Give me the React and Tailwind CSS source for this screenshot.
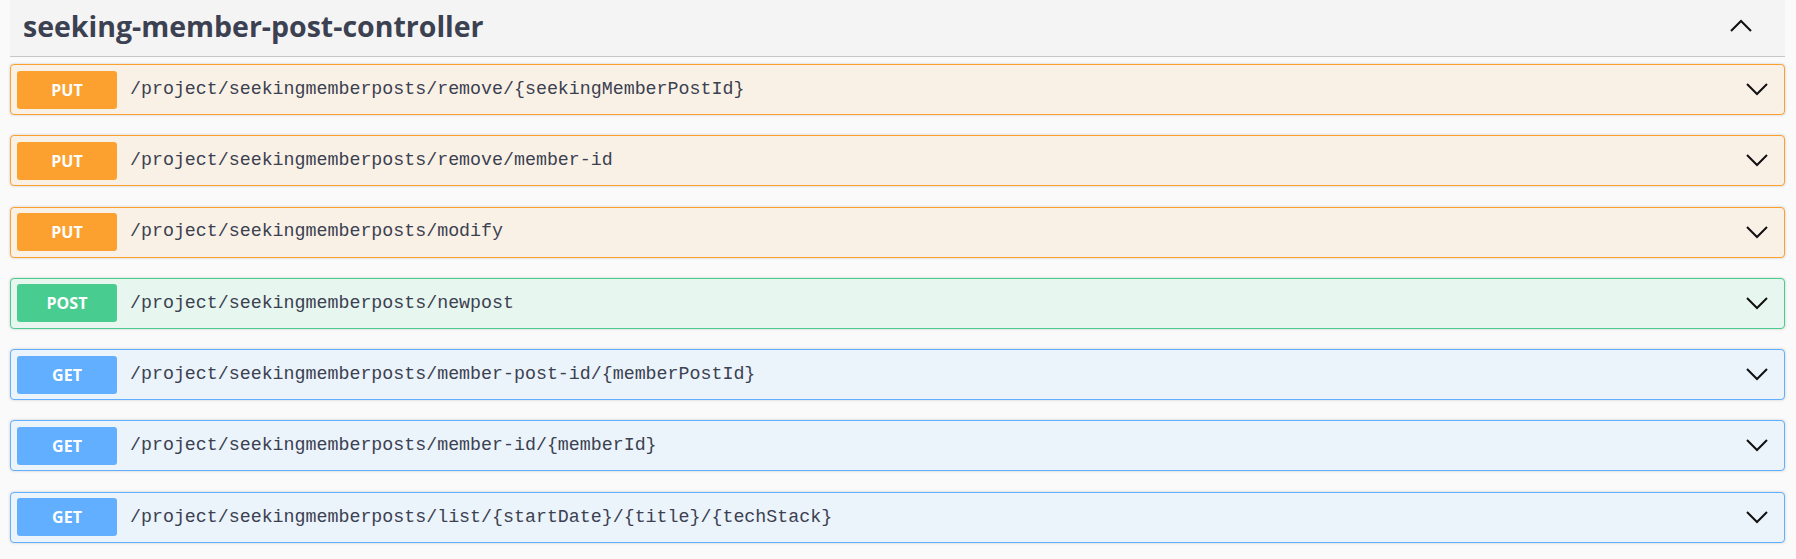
import React from 'react';

const ops = [
  { method: 'PUT', path: '/project/seekingmemberposts/remove/{seekingMemberPostId}' },
  { method: 'PUT', path: '/project/seekingmemberposts/remove/member-id' },
  { method: 'PUT', path: '/project/seekingmemberposts/modify' },
  { method: 'POST', path: '/project/seekingmemberposts/newpost' },
  { method: 'GET', path: '/project/seekingmemberposts/member-post-id/{memberPostId}' },
  { method: 'GET', path: '/project/seekingmemberposts/member-id/{memberId}' },
  { method: 'GET', path: '/project/seekingmemberposts/list/{startDate}/{title}/{techStack}' },
];

const styles = {
  PUT: { row: 'bg-[#faf1e6] border-[#fca130]', badge: 'bg-[#fca130]' },
  POST: { row: 'bg-[#e8f6f0] border-[#49cc90]', badge: 'bg-[#49cc90]' },
  GET: { row: 'bg-[#ebf3fb] border-[#61affe]', badge: 'bg-[#61affe]' },
};

function Chevron({ up }) {
  return (
    <svg width="22" height="13" viewBox="0 0 22 13" fill="none" stroke="#111" strokeWidth="2">
      {up ? <path d="M1 12 L11 2 L21 12" /> : <path d="M1 1 L11 11 L21 1" />}
    </svg>
  );
}

export default function App() {
  return (
    <div className="w-[1796px] h-[559px] bg-[#fafafa] pl-[10px] pr-[11px] overflow-hidden">
      {/* tag header */}
      <div className="h-[57px] bg-[#f4f4f4] border-b border-[#c4c6ca] flex items-center justify-between pl-[13px] pr-[33px]">
        <h3 className="font-['Open_Sans',sans-serif] font-bold text-[28.5px] text-[#3b4151] leading-none -mt-[4px]">
          seeking-member-post-controller
        </h3>
        <div className="-mt-[6px]">
          <Chevron up />
        </div>
      </div>

      <div className="flex flex-col gap-[20.3px] mt-[7px]">
        {ops.map((op, i) => (
          <div
            key={i}
            className={`h-[51px] border rounded-[4px] flex items-center pl-[6px] pr-[16px] shadow-[0_0_3px_rgba(0,0,0,0.19)] ${styles[op.method].row}`}
          >
            <div
              className={`w-[100px] h-[38px] rounded-[3px] flex items-center justify-center text-white font-bold text-[16px] font-['Open_Sans',sans-serif] ${styles[op.method].badge}`}
            >
              {op.method}
            </div>
            <span className="ml-[13px] font-['Liberation_Mono',monospace] text-[18.3px] text-[#3b4151] flex-1">
              {op.path}
            </span>
            <Chevron />
          </div>
        ))}
      </div>
    </div>
  );
}
